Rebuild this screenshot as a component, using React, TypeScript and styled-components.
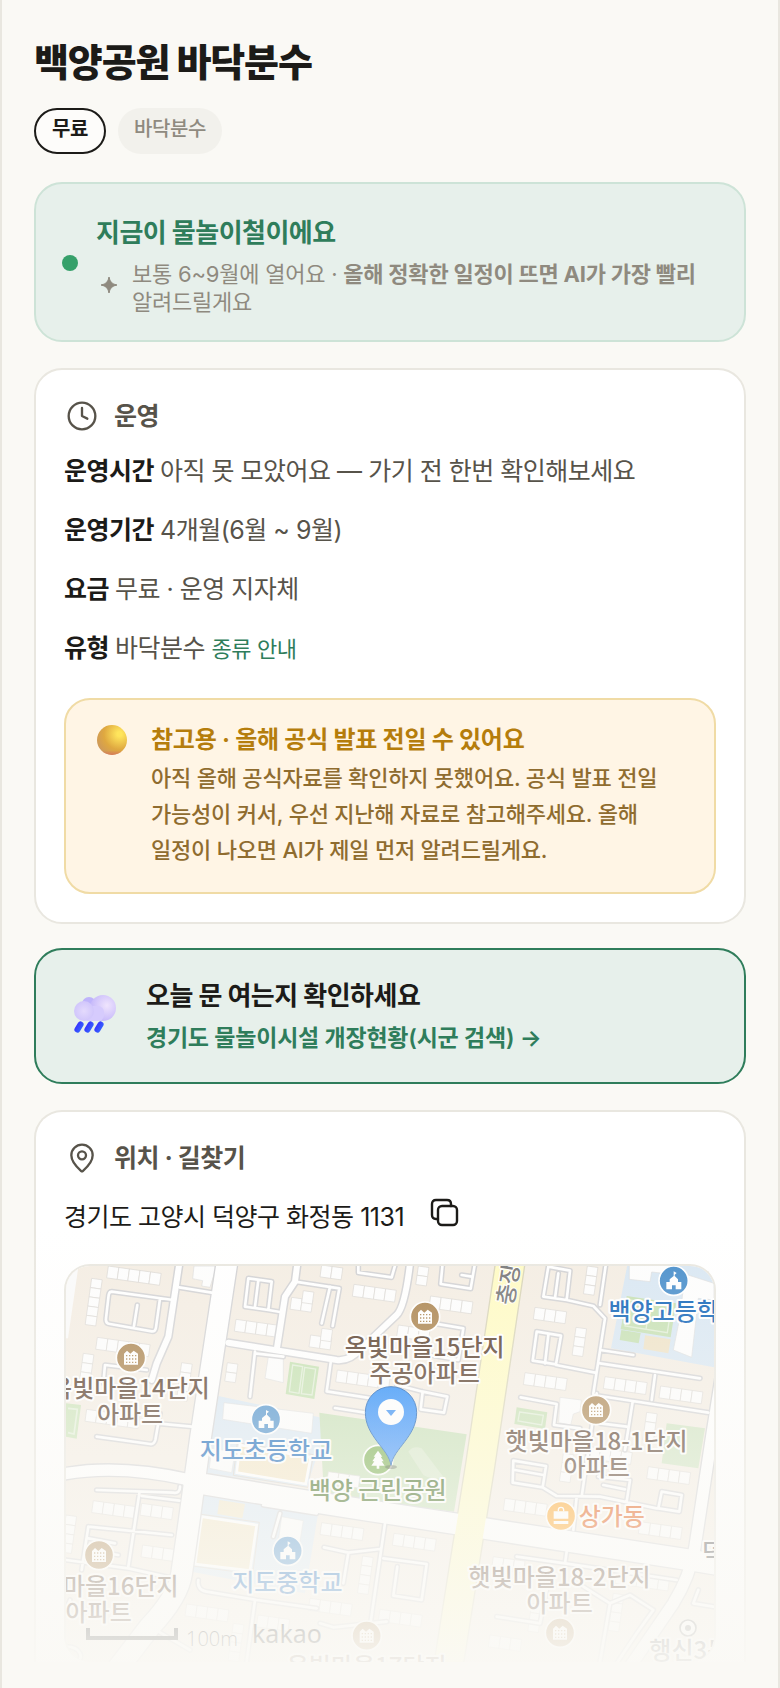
import React from "react";
import styled, { createGlobalStyle } from "styled-components";
import { Clock, MapPin } from "lucide-react";

const GlobalStyle = createGlobalStyle`
  * { box-sizing: border-box; }
  body {
    margin: 0;
    background: #faf9f5;
    color: #1c1b18;
    font-family: Inter, "Noto Sans CJK KR", sans-serif;
    letter-spacing: -0.02em;
    word-break: keep-all;
  }
  h1, h2, p, dl, dt, dd { margin: 0; }
`;

const Page = styled.main`
  position: relative;
  display: flex;
  flex-direction: column;
  gap: 24px;
  padding: 36px 32px 26px;
  border: solid #e9e7e0;
  border-width: 0 2px;
  background: #faf9f5;
`;

const Header = styled.header`
  display: flex;
  flex-direction: column;
  gap: 20px;
  margin-bottom: 4px;
`;

const Title = styled.h1`
  font-size: 38px;
  line-height: 52px;
  font-weight: 800;
  letter-spacing: -0.03em;
`;

const Chips = styled.div`
  display: flex;
  gap: 12px;
`;

const Chip = styled.span<{ $outlined?: boolean }>`
  height: 46px;
  padding: ${(p) => (p.$outlined ? "5px 16px" : "7px 16px")};
  border: ${(p) => (p.$outlined ? "2px solid #1c1b18" : "0")};
  border-radius: 23px;
  background: ${(p) => (p.$outlined ? "#fdfcfa" : "#f2f1ec")};
  color: ${(p) => (p.$outlined ? "#1c1b18" : "#8f8a7f")};
  font-size: 20px;
  line-height: 28px;
  font-weight: ${(p) => (p.$outlined ? 700 : 500)};
  letter-spacing: -0.02em;
`;

const SeasonBanner = styled.section`
  display: flex;
  align-items: center;
  gap: 18px;
  margin-bottom: 2px;
  padding: 26px 26px 24px;
  border: 2px solid #cde3d7;
  border-radius: 28px;
  background: #e7f0eb;
`;

const Dot = styled.span`
  flex: none;
  width: 16px;
  height: 16px;
  border-radius: 50%;
  background: #36a06a;
`;

const BannerBody = styled.div`
  flex: 1;
  display: flex;
  flex-direction: column;
  gap: 4px;
`;

const BannerTitle = styled.h2`
  font-size: 26px;
  line-height: 46px;
  font-weight: 700;
  letter-spacing: -0.02em;
  color: #2f7d5b;
`;

const BannerNote = styled.div`
  display: flex;
  align-items: center;
  gap: 10px;
  color: #8f8a7f;
  font-size: 22px;
  line-height: 28px;
  letter-spacing: -0.01em;
  svg { flex: none; margin-bottom: 6px; }
`;

const Card = styled.section`
  padding: 28px;
  border: 2px solid #e9e7e0;
  border-radius: 28px;
  background: #fff;
`;

const LocationCard = styled(Card)`
  padding-bottom: 0;
  border-bottom: 0;
  border-radius: 28px 28px 0 0;
`;

const SectionTitle = styled.h2`
  display: flex;
  align-items: center;
  gap: 16px;
  padding-left: 2px;
  color: #57534a;
  font-size: 25px;
  line-height: 36px;
  font-weight: 700;
  letter-spacing: -0.02em;
`;

const Facts = styled.dl`
  display: flex;
  flex-direction: column;
  gap: 19px;
  margin: 17px 0 29px;
  font-size: 25px;
  line-height: 40px;
  letter-spacing: -0.02em;
`;

const Fact = styled.div`
  display: flex;
  align-items: baseline;
  gap: 6px;
  dt { font-weight: 700; }
  dd { color: #57534a; }
`;

const GuideLink = styled.a`
  color: #2f7d5b;
  font-size: 22px;
  letter-spacing: -0.02em;
  text-decoration: none;
`;

const Notice = styled.aside`
  display: flex;
  align-items: flex-start;
  gap: 23px;
  padding: 22px 30px 24px;
  border: 2px solid #f0dba5;
  border-radius: 26px;
  background: #fff5e5;
  color: #8f6c2f;
  font-size: 22px;
  line-height: 36px;
  font-weight: 500;
  letter-spacing: -0.01em;
  svg { flex: none; margin-top: 2px; }
`;

const NoticeTitle = styled.h2`
  margin-bottom: 2px;
  color: #b57d0c;
  font-size: 24px;
  line-height: 36px;
  font-weight: 700;
  letter-spacing: -0.01em;
`;

const StatusLink = styled.a`
  display: flex;
  align-items: center;
  gap: 28px;
  margin-bottom: 2px;
  padding: 27px 34px 25px;
  border: 2px solid #2f7d5b;
  border-radius: 28px;
  background: #e7f0eb;
  color: #1c1b18;
  text-decoration: none;
  svg { flex: none; }
`;

const StatusText = styled.span`
  display: flex;
  flex-direction: column;
  gap: 4px;
`;

const StatusTitle = styled.strong`
  font-size: 26px;
  line-height: 38px;
  font-weight: 700;
  letter-spacing: -0.02em;
`;

const StatusSub = styled.span`
  color: #2f7d5b;
  font-size: 23px;
  line-height: 38px;
  font-weight: 600;
  letter-spacing: -0.01em;
`;

const Address = styled.div`
  display: flex;
  align-items: center;
  gap: 26px;
  margin: 21px 0 27px;
  font-size: 25px;
  line-height: 40px;
  letter-spacing: -0.02em;
`;

const IconButton = styled.button`
  display: flex;
  padding: 0 0 8px;
  border: 0;
  background: none;
  color: #1c1b18;
`;

const MapFrame = styled.div`
  height: 398px;
  overflow: hidden;
  border: 2px solid #e9e7e0;
  border-bottom: 0;
  border-radius: 26px;
  svg { display: block; width: 100%; height: 100%; }
`;

const Fade = styled.div`
  position: absolute;
  right: 0;
  bottom: 0;
  left: 0;
  height: 460px;
  background: linear-gradient(rgba(250, 249, 245, 0), #faf9f5);
  pointer-events: none;
`;

/* ---- Map: drawn on a 1944 x 1188 plane, three units to the pixel ---- */

const LANES = [
  "M185 125L370 150M185 125Q178 125 176 135L168 205Q166 220 180 222L305 244Q316 246 318 232L330 145M262 165L252 228",
  "M388 112L485 128M165 345L290 360M165 345L160 400M320 520L425 530M140 560L300 582Q312 584 316 570L330 490",
  "M140 720L370 728Q390 732 390 710M268 730L235 950M275 738L388 752M115 830L365 855M115 830L95 960M48 930L235 955L370 985",
  "M115 865L195 880M110 900L205 915M445 990Q440 1020 470 1025L620 1050L800 1075M615 1050L590 1235M300 1130L420 1200",
  "M595 85L665 95L655 180L585 170ZM625 90L615 170M655 180L690 186M615 305L600 440M615 310L700 320M640 765L800 790M690 790L670 860",
  "M735 95L868 115L848 228M840 110L815 220M925 40L925 68L1025 82L1037 40M1178 40L1172 102L1262 116L1275 40M1235 75L1265 80",
  "M842 338L830 424L985 448M855 474L960 490M1118 425L1192 440L1182 488L1112 478ZM1040 405L1118 425M1120 215L1240 235L1225 330L1110 310",
  "M1005 820L960 1130M822 892L895 908L990 897M1000 925L1130 942L1115 1050L1030 1037L1042 950M810 1120L850 1132L1010 1115M895 908L880 1000",
  "M1495 50L1560 62L1550 150L1480 140ZM1525 70L1515 145M1550 150L1630 168L1665 205L1630 430M1668 40L1650 165",
  "M1460 245L1533 257L1518 343L1448 332ZM1495 255L1485 340M1518 345L1635 368M1650 300L1750 315M1650 340L1950 385M1815 375L1805 450",
  "M1630 435L1975 488M1412 442L1520 462L1512 525L1590 535M1748 455L1725 600M1650 520L1730 530M1640 430L1595 740",
  "M1390 632L1488 648L1478 712L1388 698ZM1395 660L1480 675M1478 712L1520 738L1650 740L1820 775M1580 740L1570 840M1835 725L1895 735L1888 785L1825 775ZM1645 680L1740 690L1730 755M1660 705L1725 718",
  "M1550 905L1545 940L1880 990M1545 940L1400 920M1600 1010L1680 1060L1740 1035L1810 1080L1760 1150L1700 1240M1490 1020L1470 1120L1340 1100M1680 1060L1650 1235M1945 1020L1930 1060L1990 1070",
  "M40 1100L60 1050M48 1190Q80 1190 90 1210Q100 1235 60 1240",
];
const STREETS = [
  "M388 40L355 260L320 340L305 390",
  "M535 278L860 330Q900 335 940 290L1040 195Q1065 170 1080 40",
  "M742 40L735 95L705 140L680 300",
];
const AVENUES = [
  "M532 30L452 560L415 830L395 970Q385 1040 300 1130L200 1260",
  "M430 697L690 740L960 782L1260 828L1320 838L1920 930L2010 945",
];
const SIDE_AVENUES = ["M30 674Q200 640 420 690", "M2020 340L1985 560L1935 890Q1920 980 1870 1060L1740 1250"];
const BOULEVARD = "M1382 30L1290 650L1250 900L1195 1250";

type Block = [x: number, y: number, count: number, vertical?: boolean];
const BLOCKS: Block[] = [
  [175, 48, 5], [125, 85, 5, true], [142, 262, 5], [100, 310, 3, true], [395, 338, 4, true], [110, 478, 5],
  [130, 752, 4], [275, 760, 3], [48, 795, 4, true], [278, 885, 3], [410, 1062, 4], [558, 208, 4], [532, 338, 2, true],
  [624, 1095, 3], [550, 1120, 4, true], [815, 45, 2], [912, 103, 4], [725, 142, 2], [760, 122, 1], [782, 255, 2],
  [816, 235, 1], [862, 360, 5], [1142, 138, 4], [1105, 48, 2, true], [1045, 225, 3], [815, 818, 4], [1032, 850, 4], [938, 918, 4, true],
  [780, 1045, 4], [990, 1078, 4], [835, 665, 3], [1612, 48, 3, true], [1455, 172, 3], [1578, 232, 3, true],
  [1425, 368, 4], [1665, 380, 4], [1832, 408, 4], [1790, 487, 3, true], [1795, 650, 4], [1365, 745, 4],
  [1770, 815, 4], [1540, 610, 3, true], [1700, 965, 5], [1690, 1030, 4, true], [1330, 920, 3], [1620, 590, 4],
  [1445, 1060, 3, true], [1320, 1155, 3],
];

const BlockRow = ({ x, y, count, vertical }: { x: number; y: number; count: number; vertical?: boolean }) => (
  <g transform={`translate(${x} ${y}) rotate(8)`} fill="#fdfdfd" stroke="#d9d6d2" strokeWidth="2">
    {Array.from({ length: count }, (_, i) => (
      <rect key={i} x={vertical ? 0 : i * 32} y={vertical ? i * 28 : 0} width="32" height={vertical ? 28 : 36} />
    ))}
  </g>
);

const Label = ({ x, lines, y, fill, anchor = "middle" }: {
  x: number; y: number; lines: string[]; fill: string; anchor?: "middle" | "start";
}) => (
  <text textAnchor={anchor} fill={fill} stroke="#fff" strokeWidth="12" strokeLinejoin="round" paintOrder="stroke"
    fontSize="72" fontWeight="500" fontFamily='"Noto Sans CJK KR", sans-serif' letterSpacing="0">
    {lines.map((line, i) => (
      <tspan key={line} x={x} y={y + i * 78}>{line}</tspan>
    ))}
  </text>
);

const Badge = ({ x, y, fill, children }: { x: number; y: number; fill: string; children: React.ReactNode }) => (
  <g transform={`translate(${x} ${y})`}>
    <circle r="44" fill={fill} stroke="#fff" strokeWidth="5" />
    {children}
  </g>
);

const Apartment = ({ x, y }: { x: number; y: number }) => (
  <Badge x={x} y={y} fill="#aa834e">
    <path d="M-21 21V-12L-12 -21L-2 -12L8 -21L21 -12V21Z" fill="#fff" />
    <path d="M-15 -6H17M-15 4H17M-15 14H17" stroke="#aa834e" strokeWidth="4" strokeDasharray="4 5" />
  </Badge>
);

const School = ({ x, y }: { x: number; y: number }) => (
  <Badge x={x} y={y} fill="#488ecb">
    <path d="M-22 26V4H-12V-4L0 -14V-28L9 -23L3 -18V-14L13 -4V4H23V26H6V14H-5V26Z" fill="#fff" />
  </Badge>
);

const roadLayer = (paths: string[], width: number, color: string) => (
  <path d={paths.join("")} fill="none" stroke={color} strokeWidth={width} strokeLinejoin="round" strokeLinecap="round" />
);

const BROWN = "#533826";
const BLUE = "#0e63b8";

const NeighborhoodMap = () => (
  <svg viewBox="48 48 1944 1188" preserveAspectRatio="xMidYMin slice" role="img" aria-label="백양공원 주변 지도">
    <defs>
      <linearGradient id="pin" x2="0" y2="1">
        <stop stopColor="#1c86fa" />
        <stop offset="1" stopColor="#3d91fb" />
      </linearGradient>
    </defs>
    <rect x="0" y="0" width="2100" height="1300" fill="#f4ede3" />
    <path d="M30 30H88L54 265H30Z" fill="#fafafa" />
    <path d="M48 460L93 465L80 566L48 560Z" fill="#cbe3b8" />
    <path d="M54 475L82 478L72 552L54 548" fill="none" stroke="#e4f0da" strokeWidth="5" />
    <path d="M505 438L837 508L770 712L468 668Z" fill="#d9e7f3" />
    <path d="M455 732L805 786L765 1030L425 965Z" fill="#d9e7f3" />
    <path d="M1735 30H2010V355L1683 295Z" fill="#d9e7f3" />
    <path d="M808 488L1250 553L1212 785L822 735Z" fill="#c6dfb5" />
    <path d="M1075 605Q1090 585 1115 595L1180 680Q1160 695 1120 675Z" fill="#d6e7c8" />
    <path d="M720 335L807 350L793 447L707 432Z" fill="#c3e0af" />
    <path d="M728 345L758 350L747 430L718 425ZM764 352L797 357L786 435L754 431Z" fill="none" stroke="#e2efd8" strokeWidth="4" />
    <path d="M1850 520L1965 535L1945 655L1835 640Z" fill="#cfe3c0" />
    <path d="M1400 472L1492 487L1485 537L1393 522Z" fill="#c6e0b3" />
    <path d="M1409 486L1480 496L1475 525L1404 513Z" fill="none" stroke="#e2efd8" strokeWidth="4" />
    <path d="M1730 138L1878 160L1862 262L1712 238Z" fill="#c6e0b3" />
    <path d="M1738 150L1864 170L1852 248L1725 228ZM1800 160L1788 238" fill="none" stroke="#e2efd8" strokeWidth="4" />
    <path d="M1714 240L1772 249L1766 280L1709 270Z" fill="#c6e0b3" />
    <path d="M1785 256L1862 268L1855 310L1780 297Z" fill="#eee2c6" />
    <path d="M570 585L782 622L767 702L560 668Z" fill="#f3e5c4" stroke="#fff" strokeWidth="8" />
    <path d="M562 578L790 614L774 712L550 676Z" fill="none" stroke="#d9c9b5" strokeWidth="2" />
    <path d="M508 750L585 762L577 805L502 792Z" fill="#f2e6c6" />
    <path d="M455 800L620 825L600 962L435 942Z" fill="#f2e6c6" stroke="#fff" strokeWidth="8" />
    <path d="M447 792L628 817L608 972L427 948Z" fill="none" stroke="#d9c9b5" strokeWidth="2" />
    <g fill="#fdfdfd" stroke="#dcdcdc" strokeWidth="2">
      <path d="M522 458L790 490L785 550L518 508Z" />
      <path d="M485 595L555 606L545 668L478 655Z" />
      <path d="M695 800L760 812L745 905L682 895Z" />
      <path d="M1738 40L1738 88L1800 95L1805 66L1860 72V40Z" />
      <path d="M1905 72L1992 100V150L1945 145L1925 322L1870 300L1890 200Z" />
      <path d="M1530 442L1594 450L1590 485L1570 492L1562 525L1526 518Z" />
      <path d="M432 48H500L480 112L455 108L458 92L428 86Z" />
      <path d="M655 320L700 325V398L645 385Z" />
    </g>
    {BLOCKS.map(([x, y, count, vertical]) => (
      <BlockRow key={`${x}-${y}`} x={x} y={y} count={count} vertical={vertical} />
    ))}
    {roadLayer(LANES, 17, "#d2d2d4")}
    {roadLayer(STREETS, 27, "#d2d2d4")}
    {roadLayer(SIDE_AVENUES, 42, "#d2d2d4")}
    {roadLayer(AVENUES, 70, "#d2d2d4")}
    {roadLayer(LANES, 8, "#ffffff")}
    {roadLayer(STREETS, 18, "#ffffff")}
    {roadLayer(SIDE_AVENUES, 34, "#ffffff")}
    {roadLayer([BOULEVARD], 92, "#d8d4b8")}
    {roadLayer(AVENUES, 62, "#ffffff")}
    {roadLayer([BOULEVARD], 84, "#fffbc4")}

    <text transform="translate(1388 168) rotate(-80)" fill="#777" stroke="#fff" strokeWidth="6" paintOrder="stroke"
      fontSize="68" fontWeight="500" fontFamily='"Noto Sans CJK KR", sans-serif' letterSpacing="0">충장로</text>

    <Apartment x={243} y={323} />
    <Label x={240} y={440} lines={["옥빛마을14단지", "아파트"]} fill={BROWN} />
    <Apartment x={1125} y={200} />
    <Label x={1124} y={317} lines={["옥빛마을15단지", "주공아파트"]} fill={BROWN} />
    <Apartment x={1638} y={480} />
    <Label x={1640} y={600} lines={["햇빛마을18-1단지", "아파트"]} fill={BROWN} />
    <Label x={1529} y={1007} lines={["햇빛마을18-2단지", "아파트"]} fill={BROWN} />
    <Apartment x={1530} y={1148} />
    <Apartment x={147} y={915} />
    <Label x={146} y={1034} lines={["옥빛마을16단지", "아파트"]} fill={BROWN} />
    <Apartment x={950} y={1157} />
    <Label x={950} y={1275} lines={["옥빛마을17단지"]} fill={BROWN} />

    <School x={648} y={508} />
    <Label x={648} y={626} lines={["지도초등학교"]} fill={BLUE} />
    <School x={713} y={902} />
    <Label x={712} y={1022} lines={["지도중학교"]} fill={BLUE} />
    <School x={1871} y={92} />
    <Label x={1874} y={209} lines={["백양고등학교"]} fill={BLUE} />

    <Badge x={984} y={630} fill="#76ad4a">
      <path d="M0 -28L13 -10H8L17 4H11L20 17H4V26H-4V17H-20L-11 4H-17L-8 -10H-13Z" fill="#fff" />
    </Badge>
    <Label x={983} y={746} lines={["백양 근린공원"]} fill="#356210" />
    <Badge x={1533} y={798} fill="#ffa01b">
      <path d="M-22 -14H22V8H-22ZM-22 15H22V24H-22Z" fill="#fff" />
      <path d="M-8 -14V-18A8 8 0 0 1 8 -18V-14" fill="none" stroke="#fff" strokeWidth="4" />
    </Badge>
    <Label x={1586} y={825} lines={["상가동"]} fill="#e04e00" anchor="start" />
    <Label x={1956} y={932} lines={["덕양"]} fill="#444" anchor="start" />
    <circle cx="1914" cy="1134" r="24" fill="#fff" stroke="#777" strokeWidth="5" />
    <circle cx="1914" cy="1134" r="9" fill="#777" />
    <Label x={1798} y={1226} lines={["행신3동"]} fill="#555" anchor="start" />

    <ellipse cx="1023" cy="651" rx="18" ry="6" fill="#000" opacity="0.35" />
    <path d="M1023 646C1016 596 946 560 946 487A77 77 0 0 1 1100 487C1100 560 1030 596 1023 646Z" fill="url(#pin)" stroke="#0b58b4" strokeWidth="3" />
    <circle cx="1023" cy="486" r="39" fill="#fff" />
    <path d="M1008 480H1038L1023 498Z" fill="#2e8af5" />

    <path d="M114 1134V1164H378V1134" fill="none" stroke="#000" strokeWidth="12" />
    <text x="408" y="1187" fontSize="60" fill="#000" fontFamily='"Open Sans", sans-serif' fontWeight="300" letterSpacing="0">100m</text>
    <text x="606" y="1180" fontSize="75" fill="#000" fontFamily='"Noto Sans", sans-serif' fontWeight="400" letterSpacing="0">kakao</text>
  </svg>
);

const Sparkle = () => (
  <svg width="26" height="26" viewBox="0 0 26 26" fill="#8f8a7f" aria-hidden="true">
    <path d="M13 5Q14 12 21 13Q14 14 13 21Q12 14 5 13Q12 12 13 5Z" stroke="#8f8a7f" />
  </svg>
);

const CopyIcon = () => (
  <svg width="30" height="30" viewBox="0 0 30 30" fill="none" stroke="currentColor" strokeWidth="2.4" strokeLinecap="round" aria-hidden="true">
    <rect x="8" y="8" width="19" height="19" rx="4" />
    <path d="M8 21H6Q2 21 2 17V6Q2 2 6 2H17Q21 2 21 6V8" />
  </svg>
);

const YellowBall = () => (
  <svg width="32" height="32" viewBox="0 0 32 32" aria-hidden="true">
    <defs>
      <radialGradient id="ball" cx="0.75" cy="0.3" r="0.8">
        <stop offset="0.1" stopColor="#ffe55c" />
        <stop offset="0.65" stopColor="#dfa840" />
        <stop offset="1" stopColor="#cf9a58" />
      </radialGradient>
      <linearGradient id="ballBase" x2="0" y2="1">
        <stop offset="0.85" stopColor="#d9705a" stopOpacity="0" />
        <stop offset="1" stopColor="#d9705a" stopOpacity="0.8" />
      </linearGradient>
    </defs>
    <circle cx="16" cy="16" r="15" fill="url(#ball)" />
    <circle cx="16" cy="16" r="15" fill="url(#ballBase)" />
  </svg>
);

const RainCloud = () => (
  <svg width="48" height="48" viewBox="0 0 48 48" aria-hidden="true">
    <defs>
      <radialGradient id="cloudBig" cx="0.65" cy="0.4" r="0.65">
        <stop stopColor="#efe4fd" />
        <stop offset="1" stopColor="#c5b8fa" />
      </radialGradient>
      <radialGradient id="cloudSmall" cx="0.5" cy="0.5" r="0.6">
        <stop stopColor="#e4dafd" />
        <stop offset="1" stopColor="#cdc2fb" />
      </radialGradient>
      <linearGradient id="rain" x2="1" y2="0">
        <stop stopColor="#3833ff" />
        <stop offset="1" stopColor="#3460fd" />
      </linearGradient>
    </defs>
    <circle cx="19" cy="11" r="7" fill="#bfb4fb" />
    <circle cx="33" cy="15" r="13" fill="url(#cloudBig)" />
    <rect x="12" y="13" width="22" height="15" rx="6" fill="#d6cbfd" />
    <circle cx="14" cy="18" r="10" fill="url(#cloudSmall)" />
    <g fill="url(#rain)">
      <rect x="6" y="28" width="6" height="12" rx="3" transform="rotate(32 9 34)" />
      <rect x="16" y="28" width="6" height="12" rx="3" transform="rotate(32 19 34)" />
      <rect x="26" y="28" width="6" height="12" rx="3" transform="rotate(32 29 34)" />
    </g>
  </svg>
);

export default function App() {
  return (
    <Page>
      <GlobalStyle />
      <Header>
        <Title>백양공원 바닥분수</Title>
        <Chips>
          <Chip $outlined>무료</Chip>
          <Chip>바닥분수</Chip>
        </Chips>
      </Header>

      <SeasonBanner>
        <Dot />
        <BannerBody>
          <BannerTitle>지금이 물놀이철이에요</BannerTitle>
          <BannerNote>
            <Sparkle />
            <p>보통 6~9월에 열어요 · <b>올해 정확한 일정이 뜨면 AI가 가장 빨리</b> 알려드릴게요</p>
          </BannerNote>
        </BannerBody>
      </SeasonBanner>

      <Card>
        <SectionTitle><Clock size={32} strokeWidth={1.75} />운영</SectionTitle>
        <Facts>
          <Fact><dt>운영시간</dt><dd>아직 못 모았어요 — 가기 전 한번 확인해보세요</dd></Fact>
          <Fact><dt>운영기간</dt><dd>4개월(6월 ~ 9월)</dd></Fact>
          <Fact><dt>요금</dt><dd>무료 · 운영 지자체</dd></Fact>
          <Fact><dt>유형</dt><dd>바닥분수 <GuideLink href="#types">종류 안내</GuideLink></dd></Fact>
        </Facts>
        <Notice>
          <YellowBall />
          <div>
            <NoticeTitle>참고용 · 올해 공식 발표 전일 수 있어요</NoticeTitle>
            <p>아직 올해 공식자료를 확인하지 못했어요. 공식 발표 전일 가능성이 커서, 우선 지난해 자료로 참고해주세요. 올해 일정이 나오면 AI가 제일 먼저 알려드릴게요.</p>
          </div>
        </Notice>
      </Card>

      <StatusLink href="#status">
        <RainCloud />
        <StatusText>
          <StatusTitle>오늘 문 여는지 확인하세요</StatusTitle>
          <StatusSub>경기도 물놀이시설 개장현황(시군 검색) →</StatusSub>
        </StatusText>
      </StatusLink>

      <LocationCard>
        <SectionTitle><MapPin size={32} strokeWidth={1.75} />위치 · 길찾기</SectionTitle>
        <Address>
          <span>경기도 고양시 덕양구 화정동 1131</span>
          <IconButton type="button" aria-label="주소 복사"><CopyIcon /></IconButton>
        </Address>
        <MapFrame><NeighborhoodMap /></MapFrame>
      </LocationCard>
      <Fade />
    </Page>
  );
}
